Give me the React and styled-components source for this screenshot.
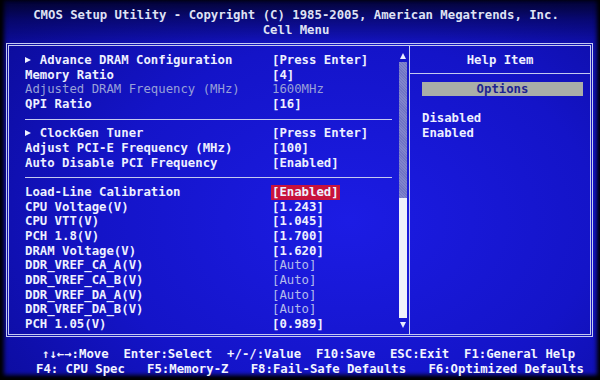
import React from 'react';
import styled, { createGlobalStyle } from 'styled-components';

const Global = createGlobalStyle`
html, body {
  margin:0;
  padding:0;
  background:#000;
}
`;

const LINE = '#c4caf0';

const Screen = styled.div`
width:600px;
height:380px;
overflow:hidden;
display:flex;
flex-direction:column;
font-family:"DejaVu Sans Mono", "Liberation Mono", monospace;
font-weight:bold;
font-size:12.3px;
letter-spacing:0;
line-height:14.7px;
color:#eef0ff;
background:
  linear-gradient(180deg, rgba(0,0,20,0.8) 0px, rgba(0,0,50,0.45) 20px, rgba(0,0,0,0) 46px),
  radial-gradient(ellipse 75% 85% at 58% 58%, #1c1ce4 0%, #1414c8 55%, #0b0b96 100%);
box-shadow: inset 5px 0 4px -1px #000, inset -4px 0 4px -1px #000, inset 0 -7px 4px -2px #000;
`;

const Title = styled.div`
height:43px;
box-sizing:border-box;
padding:8px 8px 0 0;
text-align:center;
line-height:15px;
color:#dfe2f4;
white-space:pre;
`;

const Frame = styled.div`
margin-left:6px;
width:587px;
height:294px;
box-sizing:border-box;
border:3px double ${LINE};
display:grid;
grid-template-columns:401px 1fr;
`;

const MainPanel = styled.div`
display:grid;
grid-template-columns:1fr 8px;
padding-right:2px;
border-right:1px solid ${LINE};
`;

const List = styled.div`
padding:7px 7px 0 16px;
`;

const Row = styled.div`
display:grid;
grid-template-columns:247px 1fr;
white-space:pre;
height:14.7px;
`;

const toneColor = {
  normal:'#eef0ff',
  dim:'#98a0d8',
  soft:'#b4bcec',
};

const Label = styled.span`
color:${p => toneColor[p.$tone || 'normal']};
font-weight:${p => (p.$tone === 'dim' ? 'normal' : 'bold')};
`;

const Value = styled.span`
justify-self:start;
color:${p => toneColor[p.$tone || 'normal']};
font-weight:${p => (p.$tone === 'dim' || p.$tone === 'soft' ? 'normal' : 'bold')};
background:${p => (p.$hl ? '#c8123c' : 'transparent')};
padding:0 1px;
margin-left:-1px;
`;

const Pointer = styled.span`
display:inline-block;
width:14.8px;
&::before{
  content:'';
  display:inline-block;
  border-left:6px solid #eef0ff;
  border-top:3.5px solid transparent;
  border-bottom:3.5px solid transparent;
  vertical-align:1px;
}
`;

const Divider = styled.div`
height:14.5px;
display:flex;
align-items:center;
&::after{
  content:'';
  flex:1;
  height:1px;
  background:${LINE};
}
`;

const ScrollBar = styled.div`
display:flex;
flex-direction:column;
`;

const ScrollArrow = styled.div`
display:flex;
justify-content:center;
align-items:${p => (p.$down ? 'flex-start' : 'flex-end')};
height:${p => (p.$down ? 'auto' : '16px')};
flex:${p => (p.$down ? '1' : 'none')};
padding:${p => (p.$down ? '4px 0 0' : '0 0 3px')};
box-sizing:border-box;
&::before{
  content:'';
  border-left:3.5px solid transparent;
  border-right:3.5px solid transparent;
  ${p => (p.$down ? 'border-top:6px solid #e8ecff;' : 'border-bottom:6px solid #e8ecff;')}
}
`;

const Track = styled.div`
height:136px;
background:
  repeating-linear-gradient(45deg, rgba(255,255,255,0.12) 0 1px, rgba(0,0,0,0) 1px 2px),
  #7074c4;
`;

const Thumb = styled.div`
height:120px;
background:#f0f2fa;
`;

const HelpPanel = styled.div`
display:flex;
flex-direction:column;
`;

const HelpHeader = styled.div`
height:26px;
display:flex;
align-items:center;
justify-content:center;
border-bottom:1px solid ${LINE};
padding-top:1px;
box-sizing:content-box;
`;

const OptionsBar = styled.div`
margin:8px 7px 0 12px;
height:14px;
line-height:14px;
background:#a9aea8;
color:#1c2290;
text-align:center;
`;

const HelpText = styled.div`
padding:15px 0 0 12px;
`;

const Footer = styled.div`
padding-top:9.5px;
line-height:15px;
white-space:pre;
color:#f2f4ff;
`;

const FooterLine = styled.div`
padding-left:${p => p.$indent}px;
`;

const groups = [
  [
    { label:'Advance DRAM Configuration', value:'[Press Enter]', sub:true },
    { label:'Memory Ratio', value:'[4]' },
    { label:'Adjusted DRAM Frequency (MHz)', value:'1600MHz', tone:'dim', vtone:'dim' },
    { label:'QPI Ratio', value:'[16]' },
  ],
  [
    { label:'ClockGen Tuner', value:'[Press Enter]', sub:true },
    { label:'Adjust PCI-E Frequency (MHz)', value:'[100]' },
    { label:'Auto Disable PCI Frequency', value:'[Enabled]' },
  ],
  [
    { label:'Load-Line Calibration', value:'[Enabled]', hl:true },
    { label:'CPU Voltage(V)', value:'[1.243]' },
    { label:'CPU VTT(V)', value:'[1.045]' },
    { label:'PCH 1.8(V)', value:'[1.700]' },
    { label:'DRAM Voltage(V)', value:'[1.620]' },
    { label:'DDR_VREF_CA_A(V)', value:'[Auto]', vtone:'soft' },
    { label:'DDR_VREF_CA_B(V)', value:'[Auto]', vtone:'soft' },
    { label:'DDR_VREF_DA_A(V)', value:'[Auto]', vtone:'soft' },
    { label:'DDR_VREF_DA_B(V)', value:'[Auto]', vtone:'soft' },
    { label:'PCH 1.05(V)', value:'[0.989]' },
  ],
];

const App = () => {
  return (
    <Screen>
      <Global />
      <Title>
        <div>CMOS Setup Utility - Copyright (C) 1985-2005, American Megatrends, Inc.</div>
        <div>Cell Menu</div>
      </Title>

      <Frame>
        <MainPanel>
          <List>
            {groups.map((g, gi) => (
              <React.Fragment key={gi}>
                {gi > 0 && <Divider />}
                {g.map(o => (
                  <Row key={o.label}>
                    <Label $tone={o.tone}>
                      {o.sub && <Pointer />}
                      {o.label}
                    </Label>
                    <Value $tone={o.vtone} $hl={o.hl}>{o.value}</Value>
                  </Row>
                ))}
              </React.Fragment>
            ))}
          </List>
          <ScrollBar>
            <ScrollArrow />
            <Track />
            <Thumb />
            <ScrollArrow $down />
          </ScrollBar>
        </MainPanel>

        <HelpPanel>
          <HelpHeader>Help Item</HelpHeader>
          <OptionsBar>Options</OptionsBar>
          <HelpText>
            <div>Disabled</div>
            <div>Enabled</div>
          </HelpText>
        </HelpPanel>
      </Frame>

      <Footer>
        <FooterLine $indent={42}>{'↑↓←→:Move  Enter:Select  +/-/:Value  F10:Save  ESC:Exit  F1:General Help'}</FooterLine>
        <FooterLine $indent={36}>{'F4: CPU Spec   F5:Memory-Z   F8:Fail-Safe Defaults   F6:Optimized Defaults'}</FooterLine>
      </Footer>
    </Screen>
  );
};

export default App;
